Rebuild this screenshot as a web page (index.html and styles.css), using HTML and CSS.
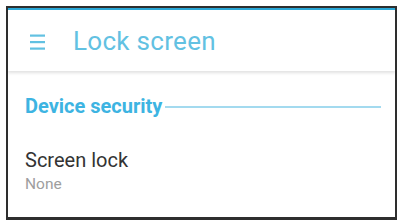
FILE: index.html
```html
<!DOCTYPE html>
<html lang="en">
<head>
    <meta charset="UTF-8">
    <meta name="viewport" content="width=device-width, initial-scale=1.0">
    <link rel="stylesheet" href="styles.css">
    <title>Lock screen</title>
</head>
<body>
    <div class="frame">
        <div class="header">
            <svg class="menu" width="15" height="16" viewBox="0 0 15 16">
                <rect x="0" y="0.5" width="15" height="2.2" fill="#62c1e2"/>
                <rect x="0" y="7" width="15" height="2.2" fill="#62c1e2"/>
                <rect x="0" y="13.5" width="15" height="2.2" fill="#62c1e2"/>
            </svg>
            <span class="title">Lock screen</span>
        </div>
        <div class="content">
            <div class="section">
                <span class="section-title">Device security</span>
                <span class="section-line"></span>
            </div>
            <div class="item">
                <div class="item-title">Screen lock</div>
                <div class="item-sub">None</div>
            </div>
        </div>
    </div>
</body>
</html>
```

FILE: styles.css
```css
body {
    margin: 0;
    background-color: #fff;
    font-family: 'Roboto', 'Liberation Sans', sans-serif;
}

.frame {
    margin: 6px 4px 0 6px;
    height: 214px;
    border: 2px solid #2e2e2e;
    border-bottom-width: 3px;
    background-color: #fff;
    box-sizing: border-box;
    overflow: hidden;
}

.header {
    display: flex;
    align-items: center;
    height: 63px;
    border-top: 2px solid #2aa7d6;
    box-shadow: 0 2px 3px rgba(0, 0, 0, 0.12);
    padding-left: 22px;
    box-sizing: border-box;
}

.menu {
    margin-right: 28px;
    margin-top: 2px;
}

.title {
    font-size: 26px;
    color: #62c1e2;
    letter-spacing: 0.3px;
}

.content {
    padding: 23px 14px 0 17px;
}

.section {
    display: flex;
    align-items: center;
}

.section-title {
    font-size: 20px;
    font-weight: bold;
    color: #3db4e2;
}

.section-line {
    flex: 1;
    height: 2px;
    margin-left: 3px;
    margin-top: 1px;
    background-color: #a3daef;
}

.item {
    margin-top: 30px;
}

.item-title {
    font-size: 20px;
    color: #333;
}

.item-sub {
    margin-top: 3px;
    font-size: 15.5px;
    color: #9e9e9e;
}
```
